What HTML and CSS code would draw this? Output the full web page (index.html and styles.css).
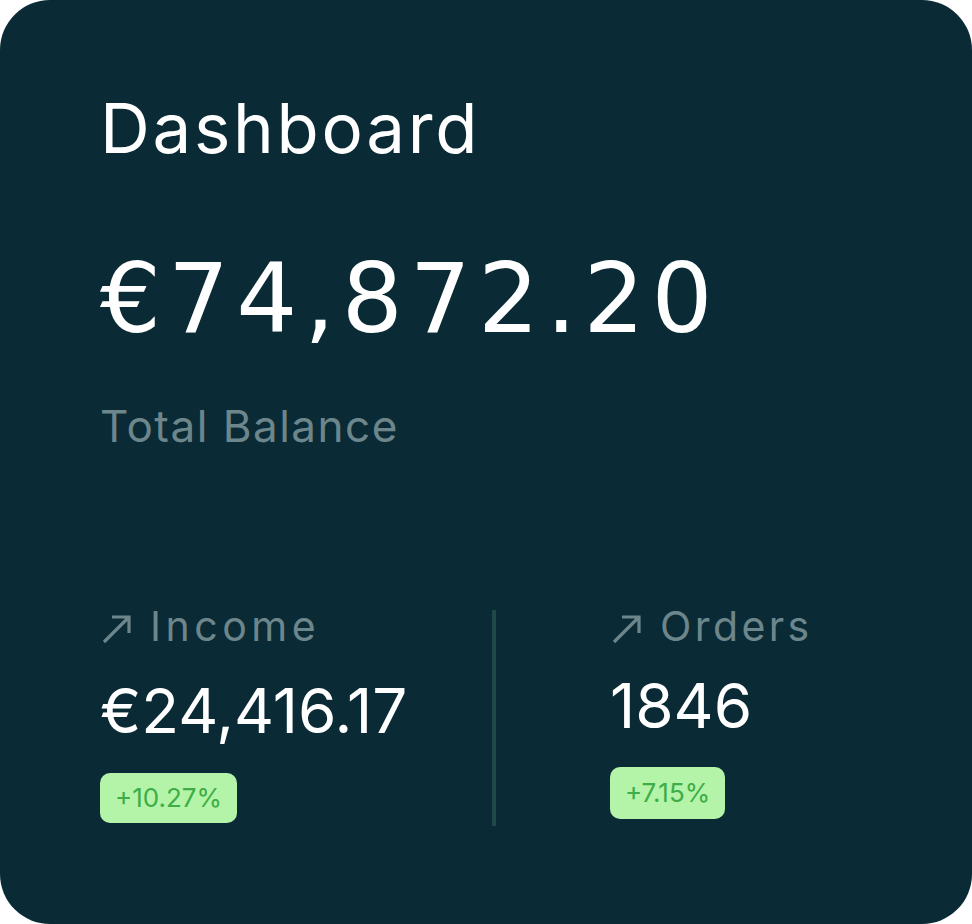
FILE: index.html
```html
<!DOCTYPE html>
<html lang="en">
<head>
    <meta charset="UTF-8">
    <meta name="viewport" content="width=device-width, initial-scale=1.0">
    <title>Dashboard</title>
    <link rel="stylesheet" href="styles.css">
</head>
<body>

    <div class="card">
        <h1 class="title">Dashboard</h1>

        <div class="balance">€74,872.20</div>
        <div class="balance-label">Total Balance</div>

        <div class="stats">
            <div class="stat stat-left">
                <div class="stat-label">
                    <svg class="arrow" width="36" height="30" viewBox="0 0 36 30">
                        <path d="M4 27 L28 3 M12 2 L29 2 L29 18" fill="none" stroke="currentColor" stroke-width="3.2"/>
                    </svg>
                    <span class="label-text label-income">Income</span>
                </div>
                <div class="stat-value">€24,416.17</div>
                <span class="badge">+10.27%</span>
            </div>

            <div class="divider"></div>

            <div class="stat stat-right">
                <div class="stat-label">
                    <svg class="arrow" width="36" height="30" viewBox="0 0 36 30">
                        <path d="M4 27 L28 3 M12 2 L29 2 L29 18" fill="none" stroke="currentColor" stroke-width="3.2"/>
                    </svg>
                    <span class="label-text">Orders</span>
                </div>
                <div class="stat-value">1846</div>
                <span class="badge">+7.15%</span>
            </div>
        </div>
    </div>

</body>
</html>
```

FILE: styles.css
```css
body {
    margin: 0;
    background: #ffffff;
    font-family: 'Inter', 'Liberation Sans', sans-serif;
}

.card {
    width: 972px;
    height: 924px;
    box-sizing: border-box;
    padding: 94px 100px 0 100px;
    background-color: #0a2b35;
    border-radius: 50px;
    color: #ffffff;
}

.title {
    margin: 0;
    font-size: 69px;
    font-weight: 400;
    line-height: 1;
    letter-spacing: 2.7px;
}

/* big figure uses wider digits */
.balance {
    margin-top: 88px;
    font-family: 'DejaVu Sans', 'Inter', sans-serif;
    font-size: 96px;
    line-height: 1;
    letter-spacing: 7px;
}

.balance-label {
    margin-top: 57px;
    font-size: 44px;
    line-height: 1;
    letter-spacing: 1.5px;
    color: #6d868c;
}

.stats {
    display: flex;
    margin-top: 158px;
}

.stat-left {
    flex: 0 0 392px;
    padding-bottom: 3px;
}

.stat-right {
    flex: 1;
    padding-left: 114px;
}

.stat-label {
    display: flex;
    align-items: center;
    font-size: 41px;
    line-height: 1;
    color: #6d868c;
}

.label-text {
    letter-spacing: 3.4px;
}

.label-income {
    letter-spacing: 4.5px;
}

.arrow {
    flex-shrink: 0;
    margin-top: 7px;
    margin-right: 14px;
}

.stat-value {
    margin-top: 33px;
    font-size: 62px;
    line-height: 1;
}

.stat-right .stat-value {
    margin-top: 28px;
}

.badge {
    display: inline-block;
    margin-top: 31px;
    padding: 0 15px;
    height: 50px;
    line-height: 50px;
    font-size: 26px;
    color: #3ead47;
    background-color: #b3f4a9;
    border-radius: 10px;
}

.stat-right .badge {
    margin-top: 30px;
    height: 52px;
    line-height: 52px;
}

.divider {
    flex: 0 0 4px;
    margin-top: 4px;
    background-color: #1e4947;
}
```
